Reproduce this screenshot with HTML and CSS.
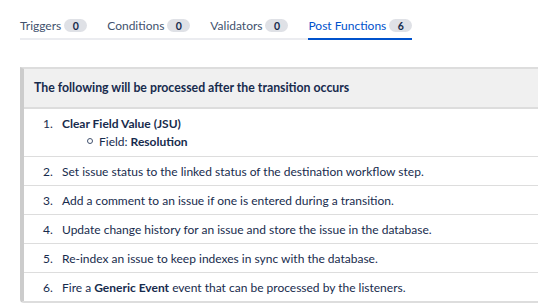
FILE: index.html
```html
<!DOCTYPE html>
<html>
<head>
<meta charset="utf-8">
<link rel="stylesheet" href="styles.css">
</head>
<body>
<div class="page">
  <div class="tabs">
    <div class="tab">Triggers <span class="badge">0</span></div>
    <div class="tab">Conditions <span class="badge">0</span></div>
    <div class="tab">Validators <span class="badge">0</span></div>
    <div class="tab active">Post Functions <span class="badge">6</span></div>
  </div>
  <div class="panel">
    <div class="panel-head">The following will be processed after the transition occurs</div>
    <ol class="items">
      <li class="item first"><span class="num">1.</span><div class="body"><b>Clear Field Value (JSU)</b>
        <div class="sub"><span class="circle"></span>Field: <b>Resolution</b></div></div></li>
      <li class="item"><span class="num">2.</span><div class="body">Set issue status to the linked status of the destination workflow step.</div></li>
      <li class="item"><span class="num">3.</span><div class="body">Add a comment to an issue if one is entered during a transition.</div></li>
      <li class="item"><span class="num">4.</span><div class="body">Update change history for an issue and store the issue in the database.</div></li>
      <li class="item"><span class="num">5.</span><div class="body">Re-index an issue to keep indexes in sync with the database.</div></li>
      <li class="item"><span class="num">6.</span><div class="body">Fire a <b>Generic Event</b> event that can be processed by the listeners.</div></li>
    </ol>
  </div>
</div>
</body>
</html>
```
FILE: styles.css
```css
html, body { margin: 0; padding: 0; background: #fff; }
body { font-family: Lato, "Noto Sans", sans-serif; font-size: 12px; color: #172b4d; }
.page { padding: 15px 0 0 20px; }
.tabs { display: flex; gap: 20px; width: 388px; border-bottom: 2px solid #ebecf0; }
.tab { display: flex; align-items: center; gap: 3px; height: 21px; padding-bottom: 2px; white-space: nowrap; font-size: 12px; color: #42526e; margin-bottom: -2px; border-bottom: 2px solid transparent; }
.tab.active { color: #0052cc; border-bottom-color: #0052cc; }
.badge { display: inline-flex; align-items: center; justify-content: center; min-width: 23px; height: 13px; border-radius: 7px; background: #dfe1e6; color: #172b4d; font-weight: 700; font-size: 10.5px; }
.panel { margin-top: 27px; border-left: 4px solid #ccc; border-top: 2px solid #ddd; border-bottom: 2px solid #ddd; border-bottom-left-radius: 4px; }
.panel-head { background: #f0f0f0; height: 38px; line-height: 38px; padding-left: 10px; font-size: 12.3px; font-weight: 700; border-bottom: 2px solid #ddd; }
.items { list-style: none; margin: 0; padding: 0; }
.item { display: flex; height: 28px; align-items: center; border-top: 1px solid #ddd; padding-left: 19px; }
.item.first { border-top: 0; height: 47px; align-items: flex-start; padding-top: 6px; box-sizing: border-box; line-height: 18px; }
.num { width: 19px; flex: none; }
.sub { padding-left: 25px; }
.circle { display: inline-block; width: 4px; height: 4px; border: 1px solid #42526e; border-radius: 50%; margin-right: 6px; vertical-align: 2px; }
b { font-weight: 700; }
```
